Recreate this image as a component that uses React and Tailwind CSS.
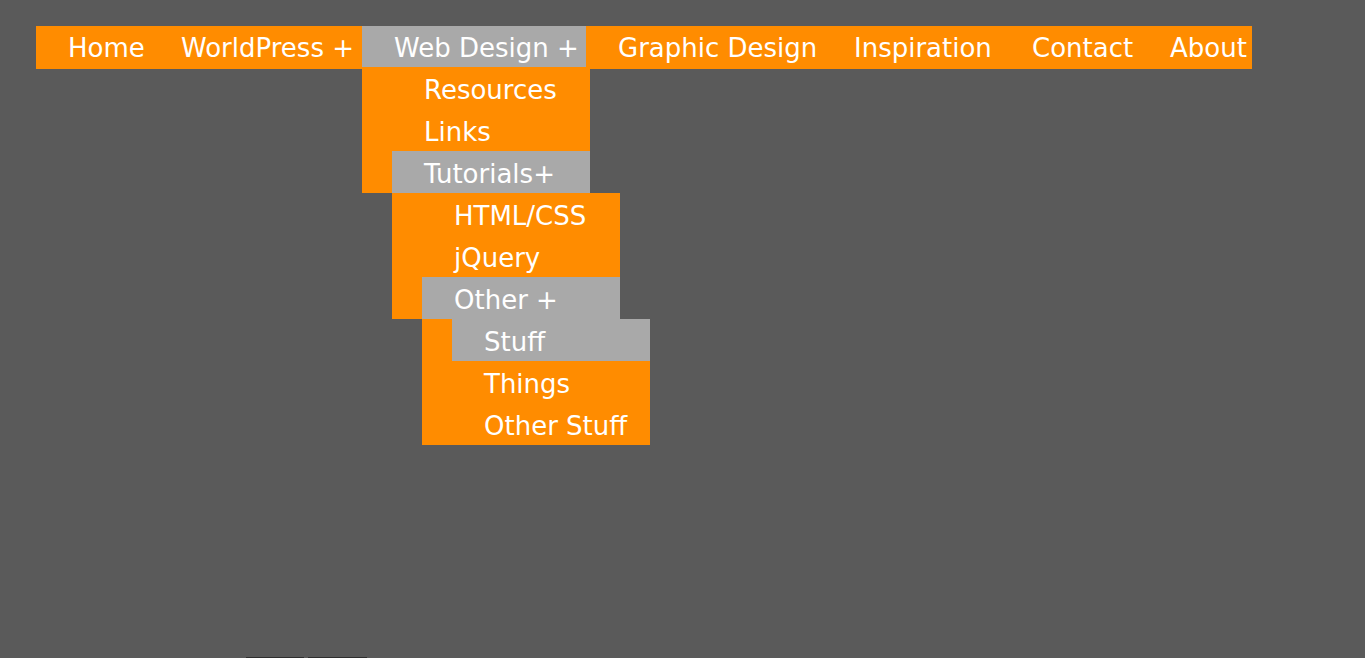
const top = [
  { label: "Home", w: "w-[113px]" },
  { label: "WorldPress +", w: "w-[213px]" },
  { label: "Web Design +", w: "w-[224px]", open: true },
  { label: "Graphic Design", w: "w-[236px]" },
  { label: "Inspiration", w: "w-[178px]" },
  { label: "Contact", w: "w-[138px]" },
  { label: "About", w: "w-[114px]" },
];

function Item({ label, active, children }) {
  return (
    <li
      className={`relative h-[42px] pl-[32px] pt-[4px] leading-[38px] whitespace-nowrap ${
        active ? "bg-[#a9a9a9]" : ""
      }`}
    >
      {label}
      {children}
    </li>
  );
}

function Sub({ children }) {
  return (
    <ul className="absolute left-0 top-full z-10 w-[228px] bg-[#ff8c00] pl-[30px]">{children}</ul>
  );
}

export default function App() {
  return (
    <div
      className="flex min-h-screen flex-col bg-[#5a5a5a] text-[26px] text-white"
      style={{ fontFamily: '"DejaVu Sans", Verdana, sans-serif' }}
    >
      <div className="flex-1 pl-[36px] pt-[26px]">
        <ul className="flex h-[43px] w-fit items-start bg-[#ff8c00]">
          {top.map((t) => (
            <li
              key={t.label}
              className={`relative h-[41px] shrink-0 pl-[32px] pt-[4px] leading-[37px] whitespace-nowrap ${t.w} ${
                t.open ? "bg-[#a9a9a9]" : ""
              }`}
            >
              {t.label}
              {t.open ? (
                <Sub>
                  <Item label="Resources" />
                  <Item label="Links" />
                  <Item label="Tutorials+" active>
                    <Sub>
                      <Item label="HTML/CSS" />
                      <Item label="jQuery" />
                      <Item label="Other +" active>
                        <Sub>
                          <Item label="Stuff" active />
                          <Item label="Things" />
                          <Item label="Other Stuff" />
                        </Sub>
                      </Item>
                    </Sub>
                  </Item>
                </Sub>
              ) : null}
            </li>
          ))}
        </ul>
      </div>
      <div className="flex h-px pl-[246px]">
        <div className="w-[58px] bg-[#2e2e2e]" />
        <div className="ml-[4px] w-[59px] bg-[#2e2e2e]" />
      </div>
    </div>
  );
}
